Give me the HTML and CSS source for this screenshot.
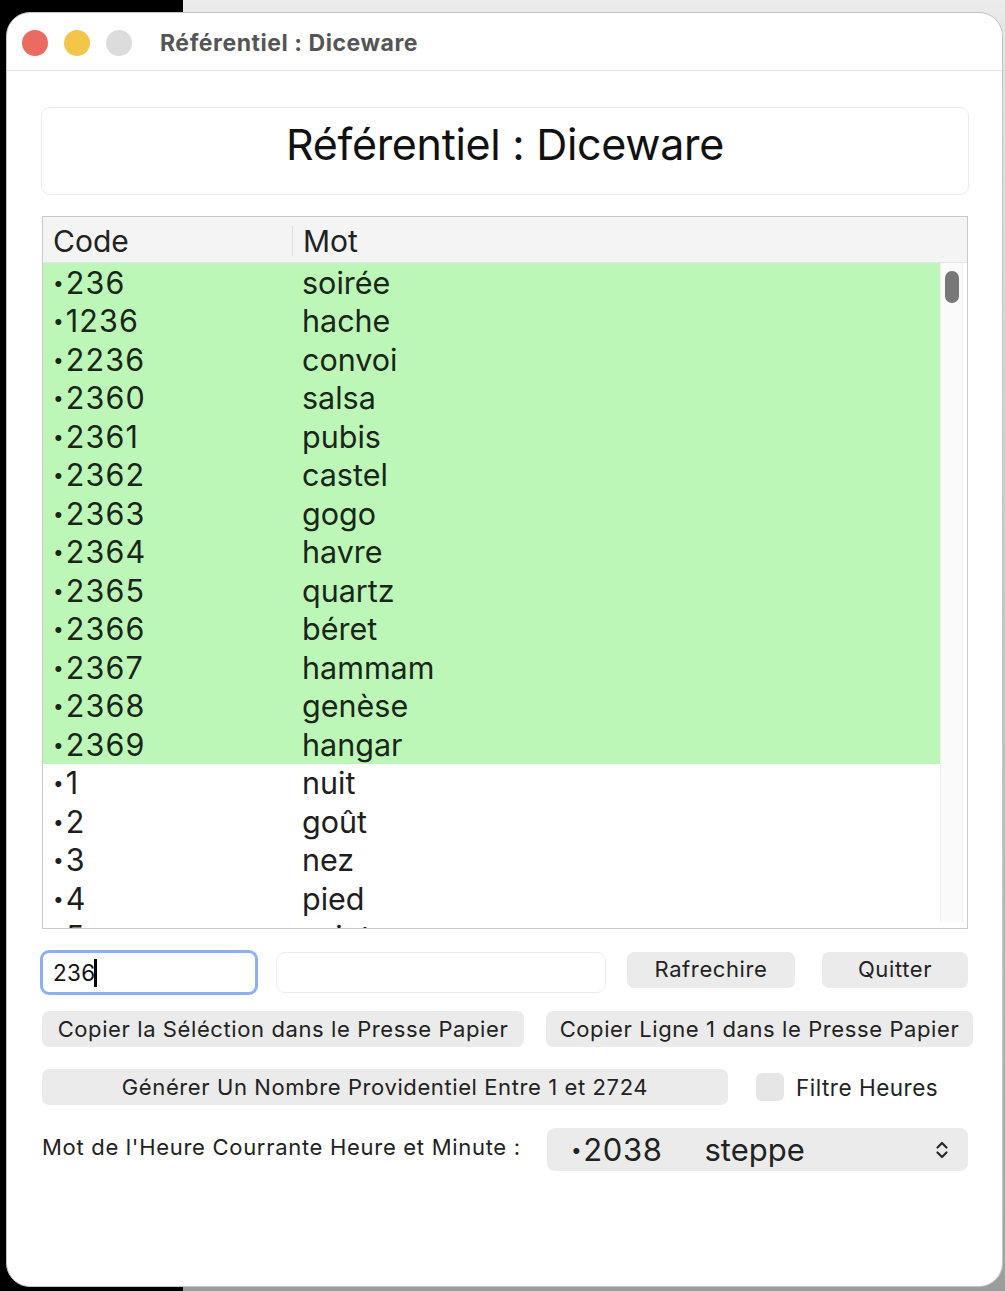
FILE: index.html
```html
<!DOCTYPE html>
<html lang="fr">
<head>
<meta charset="utf-8">
<title>Référentiel : Diceware</title>
<link rel="stylesheet" href="styles.css">
</head>
<body>
<div class="window">
  <div class="titlebar">
    <div class="lights">
      <span class="light red"></span>
      <span class="light yellow"></span>
      <span class="light gray"></span>
    </div>
    <div class="wtitle">Référentiel : Diceware</div>
  </div>
  <div class="content">
    <div class="header-box">Référentiel : Diceware</div>

    <div class="table">
      <div class="thead">
        <div class="th c1">Code</div>
        <div class="th c2">Mot</div>
      </div>
      <div class="tbody">
        <div class="rows">
          <div class="row hl"><div class="c1"><span class="dot">•</span>236</div><div class="c2">soirée</div></div>
          <div class="row hl"><div class="c1"><span class="dot">•</span>1236</div><div class="c2">hache</div></div>
          <div class="row hl"><div class="c1"><span class="dot">•</span>2236</div><div class="c2">convoi</div></div>
          <div class="row hl"><div class="c1"><span class="dot">•</span>2360</div><div class="c2">salsa</div></div>
          <div class="row hl"><div class="c1"><span class="dot">•</span>2361</div><div class="c2">pubis</div></div>
          <div class="row hl"><div class="c1"><span class="dot">•</span>2362</div><div class="c2">castel</div></div>
          <div class="row hl"><div class="c1"><span class="dot">•</span>2363</div><div class="c2">gogo</div></div>
          <div class="row hl"><div class="c1"><span class="dot">•</span>2364</div><div class="c2">havre</div></div>
          <div class="row hl"><div class="c1"><span class="dot">•</span>2365</div><div class="c2">quartz</div></div>
          <div class="row hl"><div class="c1"><span class="dot">•</span>2366</div><div class="c2">béret</div></div>
          <div class="row hl"><div class="c1"><span class="dot">•</span>2367</div><div class="c2">hammam</div></div>
          <div class="row hl"><div class="c1"><span class="dot">•</span>2368</div><div class="c2">genèse</div></div>
          <div class="row hl"><div class="c1"><span class="dot">•</span>2369</div><div class="c2">hangar</div></div>
          <div class="row"><div class="c1"><span class="dot">•</span>1</div><div class="c2">nuit</div></div>
          <div class="row"><div class="c1"><span class="dot">•</span>2</div><div class="c2">goût</div></div>
          <div class="row"><div class="c1"><span class="dot">•</span>3</div><div class="c2">nez</div></div>
          <div class="row"><div class="c1"><span class="dot">•</span>4</div><div class="c2">pied</div></div>
          <div class="row"><div class="c1"><span class="dot">•</span>5</div><div class="c2">saint</div></div>
        </div>
        <div class="scroll">
          <div class="thumb"></div>
        </div>
      </div>
    </div>

    <div class="ctl-row r1">
      <div class="field focus">236<span class="caret"></span></div>
      <div class="field plain"></div>
      <div class="btn b-refresh">Rafrechire</div>
      <div class="btn b-quit">Quitter</div>
    </div>

    <div class="ctl-row r2">
      <div class="btn b-copysel">Copier la Séléction dans le Presse Papier</div>
      <div class="btn b-copyline">Copier Ligne 1 dans le Presse Papier</div>
    </div>

    <div class="ctl-row r3">
      <div class="btn b-gen">Générer Un Nombre Providentiel Entre 1 et 2724</div>
      <div class="checkbox"></div>
      <div class="cb-label">Filtre Heures</div>
    </div>

    <div class="ctl-row r4">
      <div class="lbl">Mot de l'Heure Courrante Heure et Minute :</div>
      <div class="popup">
        <span class="pcode"><span class="dot">•</span>2038</span>
        <span class="pword">steppe</span>
        <svg class="chev" width="14" height="20" viewBox="0 0 14 20">
          <path d="M2.5 7.5 L7 3 L11.5 7.5" fill="none" stroke="#2a2a2a" stroke-width="2.2" stroke-linecap="round" stroke-linejoin="round"/>
          <path d="M2.5 12.5 L7 17 L11.5 12.5" fill="none" stroke="#2a2a2a" stroke-width="2.2" stroke-linecap="round" stroke-linejoin="round"/>
        </svg>
      </div>
    </div>
  </div>
</div>
</body>
</html>
```

FILE: styles.css
```css
html, body {
  margin: 0;
  padding: 0;
}
body {
  width: 1005px;
  height: 1291px;
  overflow: hidden;
  background:
    linear-gradient(to right, #000 0, #000 183px, transparent 183px),
    linear-gradient(to bottom, #ececec 0, #e4e4e4 40px, #a9a9a9 1200px, #9c9c9c 100%);
  padding: 12px 2px 0 6px;
  box-sizing: border-box;
  font-family: Inter, "Liberation Sans", sans-serif;
  color: #1f1f1f;
}
.window {
  width: 997px;
  height: 1275px;
  background: #fff;
  border-radius: 24px;
  box-sizing: border-box;
  border: 1px solid #c4c4c4;
  overflow: hidden;
}
.titlebar {
  height: 58px;
  border-bottom: 1px solid #e2e2e2;
  display: flex;
  align-items: center;
  box-sizing: border-box;
  padding-left: 15px;
  padding-top: 2px;
}
.lights {
  display: flex;
  gap: 16px;
}
.light {
  width: 26px;
  height: 26px;
  border-radius: 50%;
  display: block;
}
.red { background: #ec6b60; }
.yellow { background: #f4c54a; }
.gray { background: #dcdcdc; }
.wtitle {
  margin-left: 28px;
  font-size: 23px;
  font-weight: 700;
  color: #555;
  letter-spacing: 0.55px;
}
.content {
  padding: 36px 0 0 34px;
}
.header-box {
  width: 928px;
  height: 88px;
  box-sizing: border-box;
  border: 1px solid #ececec;
  border-radius: 9px;
  display: flex;
  align-items: center;
  justify-content: center;
  font-size: 43px;
  color: #111;
  padding-bottom: 14px;
  letter-spacing: -0.3px;
}
.table {
  margin-top: 21px;
  margin-left: 1px;
  width: 926px;
  height: 713px;
  box-sizing: border-box;
  border: 1px solid #c9c9c9;
  display: flex;
  flex-direction: column;
  overflow: hidden;
}
.thead {
  height: 46px;
  flex: none;
  background: #f4f4f4;
  border-bottom: 1px solid #e4e4e4;
  box-sizing: border-box;
  display: flex;
  align-items: center;
  font-size: 30px;
  color: #222;
  padding-top: 3px;
}
.c1 {
  width: 249px;
  padding-left: 10px;
  box-sizing: border-box;
  flex: none;
  display: flex;
  align-items: center;
}
.row .c1 { letter-spacing: 1.1px; }
.c2 {
  padding-left: 10px;
}
.th.c2 {
  border-left: 1px solid #dcdcdc;
  height: 30px;
  line-height: 30px;
}
.th.c1 { line-height: 30px; height: 30px; }
.dot {
  font-size: 19px;
  margin-right: 1px;
  position: relative;
  top: 1px;
}
.tbody {
  flex: 1;
  display: flex;
  min-height: 0;
}
.rows {
  flex: 1;
  overflow: hidden;
}
.row {
  height: 38.5px;
  display: flex;
  align-items: center;
  font-size: 30.5px;
  color: #1e1e1e;
}
.row.hl {
  background: #bdf7b7;
  color: #1a261a;
}
.row .c2 { padding-left: 10px; }
.scroll {
  width: 23px;
  margin-right: 4px;
  margin-bottom: 6px;
  flex: none;
  box-sizing: border-box;
  padding: 8px 0 0 4px;
  background: #fafafa;
  border-left: 1px solid #efefef;
  border-right: 1px solid #efefef;
}
.thumb {
  width: 14px;
  height: 32px;
  background: #777;
  border-radius: 7px;
}
.ctl-row {
  display: flex;
  align-items: center;
}
.r1 { margin-top: 21px; margin-left: -1px; height: 45px; }
.r2 { margin-top: 16px; margin-left: 1px; height: 36px; }
.r3 { margin-top: 22px; margin-left: 1px; height: 36px; }
.r4 { margin-top: 23px; margin-left: 1px; height: 43px; }
.field {
  box-sizing: border-box;
  border-radius: 9px;
  display: flex;
  align-items: center;
}
.field.focus {
  width: 218px;
  height: 45px;
  border: 3.5px solid #8eaff0;
  padding-left: 10px;
  font-size: 22.5px;
  color: #111;
  letter-spacing: 0.3px;
}
.caret {
  display: inline-block;
  width: 3px;
  height: 28px;
  background: #000;
  margin-left: -1px;
}
.field.plain {
  width: 330px;
  height: 41px;
  margin-left: 18px;
  border: 1px solid #ececec;
}
.btn {
  height: 36px;
  background: #ebebeb;
  border-radius: 7px;
  display: flex;
  align-items: center;
  justify-content: center;
  font-size: 22px;
  letter-spacing: 0.6px;
  color: #222;
  box-sizing: border-box;
  white-space: nowrap;
  padding-bottom: 1px;
}
.r1 .btn { align-self: flex-start; margin-top: 2px; padding-bottom: 3px; }
.b-refresh { width: 168px; margin-left: 21px; }
.b-quit { width: 146px; margin-left: 27px; }
.b-copysel { width: 482px; }
.b-copyline { width: 427px; margin-left: 22px; }
.b-gen { width: 686px; }
.checkbox {
  width: 28px;
  height: 28px;
  margin-left: 28px;
  background: #e6e6e6;
  border-radius: 6px;
}
.cb-label {
  margin-left: 12px;
  font-size: 22.5px;
  letter-spacing: 0.5px;
  color: #222;
}
.lbl {
  font-size: 22px;
  letter-spacing: 0.7px;
  color: #222;
  width: 505px;
  white-space: nowrap;
  padding-bottom: 5px;
}
.popup {
  width: 421px;
  height: 43px;
  background: #ebebeb;
  border-radius: 8px;
  display: flex;
  align-items: center;
  padding-left: 24px;
  box-sizing: border-box;
  font-size: 31px;
  color: #222;
}
.pcode { display: flex; align-items: center; letter-spacing: 0.6px; }
.pword { margin-left: 42px; }
.chev {
  margin-left: auto;
  margin-right: 19px;
}
```
